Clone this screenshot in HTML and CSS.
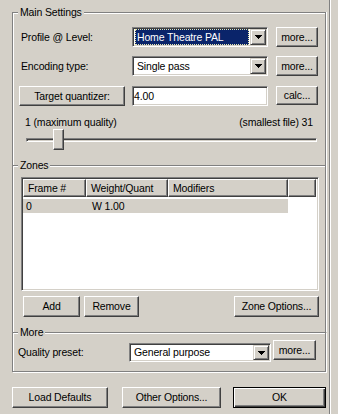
FILE: index.html
```html
<!DOCTYPE html>
<html>
<head>
<meta charset="utf-8">
<title>Settings</title>
<link rel="stylesheet" href="styles.css">
</head>
<body>
<div class="wrap">
  <fieldset class="grp">
    <legend>Main Settings</legend>
    <div class="f1">
      <div class="row">
        <span class="lbl">Profile @ Level:</span>
        <div class="combo">
          <span class="val focus">Home Theatre PAL</span>
          <span class="drop"><svg width="7" height="4" viewBox="0 0 7 4"><path d="M0 0h7v1H0zM1 1h5v1H1zM2 2h3v1H2zM3 3h1v1H3z"/></svg></span>
        </div>
        <button class="btn">more...</button>
      </div>
      <div class="row">
        <span class="lbl">Encoding type:</span>
        <div class="combo">
          <span class="val">Single pass</span>
          <span class="drop"><svg width="7" height="4" viewBox="0 0 7 4"><path d="M0 0h7v1H0zM1 1h5v1H1zM2 2h3v1H2zM3 3h1v1H3z"/></svg></span>
        </div>
        <button class="btn">more...</button>
      </div>
      <div class="row r3">
        <button class="btn tq">Target quantizer:</button>
        <div class="edit">4.00</div>
        <button class="btn calc">calc...</button>
      </div>
      <div class="sl-labels">
        <span>1 (maximum quality)</span>
        <span>(smallest file) 31</span>
      </div>
      <div class="slider">
        <div class="track"></div>
        <div class="thumb"></div>
      </div>
    </div>
  </fieldset>
  <fieldset class="grp">
    <legend>Zones</legend>
    <div class="f2">
      <div class="list">
        <div class="lhead">
          <span class="hc">Frame #</span>
          <span class="hc">Weight/Quant</span>
          <span class="hc">Modifiers</span>
          <span class="hc"></span>
        </div>
        <div class="lrow">
          <span class="c1">0</span>
          <span class="c2">W 1.00</span>
          <span class="c2"></span>
        </div>
      </div>
      <div class="btnrow">
        <button class="btn add">Add</button>
        <button class="btn remove">Remove</button>
        <button class="btn zopt">Zone Options...</button>
      </div>
    </div>
  </fieldset>
  <fieldset class="grp grp-last">
    <legend>More</legend>
    <div class="f3">
      <span class="lbl3">Quality preset:</span>
      <div class="combo combo3">
        <span class="val">General purpose</span>
        <span class="drop"><svg width="7" height="4" viewBox="0 0 7 4"><path d="M0 0h7v1H0zM1 1h5v1H1zM2 2h3v1H2zM3 3h1v1H3z"/></svg></span>
      </div>
      <button class="btn more3">more...</button>
    </div>
  </fieldset>
  <div class="bottom">
    <button class="btn ld">Load Defaults</button>
    <button class="btn oo">Other Options...</button>
    <button class="btn ok">OK</button>
  </div>
</div>
</body>
</html>
```
FILE: styles.css
```css
* { box-sizing: border-box; }
html, body { margin: 0; padding: 0; }
body {
  background: #d4d0c8;
  font-family: "Liberation Sans", Arial, sans-serif;
  font-size: 10.5px;
  letter-spacing: -0.15px;
  line-height: 13px;
  color: #000;
}
.wrap {
  width: 330px;
  height: 414px;
  padding-top: 6px;
  border-right: 1px solid #808080;
  box-shadow: 1px 0 0 #fff;
}
.grp {
  margin: 0 0 0 12px;
  padding: 0;
  width: 314px;
  min-width: 0;
  border: 1px solid #808080;
  border-bottom: 0;
  box-shadow: inset 1px 1px 0 #fff, 1px 0 0 #fff;
}
.grp + .grp { margin-top: -6px; }
.grp-last {
  border-bottom: 1px solid #808080;
  box-shadow: inset 1px 1px 0 #fff, 1px 1px 0 #fff;
}
.grp legend {
  margin-left: 5px;
  padding: 0 2px;
  height: 13px;
  line-height: 13px;
  background: #d4d0c8;
}
.btn {
  font: inherit;
  letter-spacing: inherit;
  color: #000;
  background: #d4d0c8;
  border: 1px solid;
  border-color: #fff #404040 #404040 #fff;
  box-shadow: inset -1px -1px 0 #808080;
  padding: 0;
  margin: 0;
  text-align: center;
  white-space: nowrap;
  height: 20px;
}
.f1 { padding: 8px 6px 15px 8px; }
.row {
  display: grid;
  grid-template-columns: 103px 136px 42px;
  column-gap: 8px;
  align-items: center;
  height: 20px;
}
.row + .row { margin-top: 9px; }
.row.r3 { margin-top: 10px; }
.combo {
  display: flex;
  height: 20px;
  padding: 1px;
  background: #fff;
  border: 1px solid;
  border-color: #808080 #fff #fff #808080;
  box-shadow: inset 1px 1px 0 #404040, inset -1px -1px 0 #d4d0c8;
}
.val {
  flex: 1;
  margin: 0 1px;
  padding-left: 2px;
  display: flex;
  align-items: center;
  white-space: nowrap;
  overflow: hidden;
}
.val.focus {
  background: #0a246a;
  color: #fff;
  outline: 1px dotted #e8e8b0;
  outline-offset: -1px;
}
.drop {
  width: 16px;
  display: flex;
  align-items: center;
  justify-content: center;
  background: #d4d0c8;
  border: 1px solid;
  border-color: #d4d0c8 #404040 #404040 #d4d0c8;
  box-shadow: inset 1px 1px 0 #fff, inset -1px -1px 0 #808080;
}
.drop svg { display: block; fill: #000; }
.edit {
  height: 20px;
  padding-left: 1px;
  display: flex;
  align-items: center;
  background: #fff;
  border: 1px solid;
  border-color: #808080 #fff #fff #808080;
  box-shadow: inset 1px 1px 0 #404040, inset -1px -1px 0 #d4d0c8;
}
.tq { width: 106px; margin-left: -2px; }
.calc { height: 19px; align-self: start; }
.sl-labels {
  display: flex;
  justify-content: space-between;
  margin-top: 10px;
  padding: 0 6px 0 4px;
  height: 13px;
}
.slider {
  position: relative;
  height: 21px;
  padding-top: 9px;
}
.track {
  height: 4px;
  margin: 0 2px 0 5px;
  border: 1px solid;
  border-color: #808080 #fff #fff #808080;
  box-shadow: inset 1px 1px 0 #404040, inset -1px -1px 0 #d4d0c8;
}
.thumb {
  position: absolute;
  left: 32px;
  top: 0;
  width: 11px;
  height: 21px;
  background: #d4d0c8;
  border: 1px solid;
  border-color: #fff #404040 #404040 #fff;
  box-shadow: inset -1px -1px 0 #808080;
}
.f2 { padding: 5px 6px 15px 8px; }
.list {
  height: 114px;
  padding: 1px;
  background: #fff;
  border: 1px solid;
  border-color: #808080 #fff #fff #808080;
  box-shadow: inset 1px 1px 0 #404040, inset -1px -1px 0 #d4d0c8;
}
.lhead {
  display: grid;
  grid-template-columns: 63px 82px 120px 28px;
  height: 18px;
}
.hc {
  display: flex;
  align-items: center;
  padding-left: 4px;
  background: #d4d0c8;
  border: 1px solid;
  border-color: #fff #404040 #404040 #fff;
  box-shadow: inset -1px -1px 0 #808080;
  white-space: nowrap;
  overflow: hidden;
}
.lrow {
  display: grid;
  grid-template-columns: 63px 82px 120px;
  width: 265px;
  height: 14px;
  margin-top: 2px;
  background: #d4d0c8;
  align-items: center;
}
.c1 { padding-left: 3px; }
.c2 { padding-left: 6px; }
.btnrow {
  display: flex;
  margin-top: 5px;
  height: 21px;
}
.btnrow .btn { height: 21px; }
.add { width: 57px; margin-left: 2px; }
.remove { width: 55px; margin-left: 4px; }
.zopt { width: 85px; margin-left: auto !important; }
.f3 {
  display: flex;
  align-items: flex-start;
  height: 32px;
  padding: 1px 0 9px 5px;
}
.lbl3 { width: 111px; margin-top: 6px; }
.combo3 { width: 142px; height: 19px; margin-top: 3px; }
.more3 { width: 43px; margin-left: 2px; height: 20px; }
.bottom {
  display: flex;
  margin-top: 15px;
  padding-left: 12px;
}
.bottom .btn { height: 21px; }
.ld { width: 96px; }
.oo { width: 99px; margin-left: 14px; }
.ok {
  width: 93px;
  margin-left: 12px;
  border: 1px solid #000;
  box-shadow: inset 1px 1px 0 #fff, inset -1px -1px 0 #404040, inset -2px -2px 0 #808080;
}
```
